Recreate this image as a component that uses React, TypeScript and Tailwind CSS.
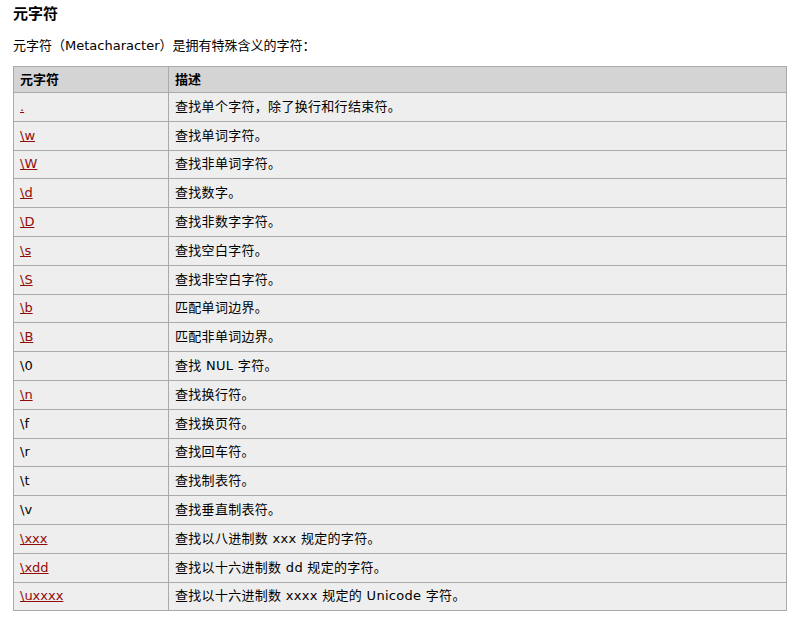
const rows: { ch: string; link: boolean; desc: string }[] = [
  { ch: '.', link: true, desc: '查找单个字符，除了换行和行结束符。' },
  { ch: '\\w', link: true, desc: '查找单词字符。' },
  { ch: '\\W', link: true, desc: '查找非单词字符。' },
  { ch: '\\d', link: true, desc: '查找数字。' },
  { ch: '\\D', link: true, desc: '查找非数字字符。' },
  { ch: '\\s', link: true, desc: '查找空白字符。' },
  { ch: '\\S', link: true, desc: '查找非空白字符。' },
  { ch: '\\b', link: true, desc: '匹配单词边界。' },
  { ch: '\\B', link: true, desc: '匹配非单词边界。' },
  { ch: '\\0', link: false, desc: '查找 NUL 字符。' },
  { ch: '\\n', link: true, desc: '查找换行符。' },
  { ch: '\\f', link: false, desc: '查找换页符。' },
  { ch: '\\r', link: false, desc: '查找回车符。' },
  { ch: '\\t', link: false, desc: '查找制表符。' },
  { ch: '\\v', link: false, desc: '查找垂直制表符。' },
  { ch: '\\xxx', link: true, desc: '查找以八进制数 xxx 规定的字符。' },
  { ch: '\\xdd', link: true, desc: '查找以十六进制数 dd 规定的字符。' },
  { ch: '\\uxxxx', link: true, desc: '查找以十六进制数 xxxx 规定的 Unicode 字符。' },
];

export default function App() {
  return (
    <div
      className="w-[800px] h-[620px] bg-white px-[13px] pt-[4px] text-[13px] text-black"
      style={{ fontFamily: '"DejaVu Sans", "Noto Sans CJK SC", sans-serif' }}
    >
      <h2 className="text-[15px] font-bold leading-[20px]">元字符</h2>
      <p className="mt-[13px] leading-[18px]">元字符（Metacharacter）是拥有特殊含义的字符：</p>
      <table className="mt-[11px] w-[774px] border-collapse border border-[#aaaaaa]">
        <thead>
          <tr className="h-[26px] bg-[#d4d4d4]">
            <th className="w-[155px] border border-[#aaaaaa] px-[6px] text-left font-bold">元字符</th>
            <th className="border border-[#aaaaaa] px-[6px] text-left font-bold">描述</th>
          </tr>
        </thead>
        <tbody>
          {rows.map((r) => (
            <tr key={r.ch} className="h-[28.8px] bg-[#eeeeee]">
              <td className="border border-[#aaaaaa] px-[6px] py-0 leading-[16px]">
                {r.link ? (
                  <a className="text-[#900b09] underline" href="#">{r.ch}</a>
                ) : (
                  r.ch
                )}
              </td>
              <td className="border border-[#aaaaaa] px-[6px] py-0 leading-[16px] tracking-[0.3px]">{r.desc}</td>
            </tr>
          ))}
        </tbody>
      </table>
    </div>
  );
}
